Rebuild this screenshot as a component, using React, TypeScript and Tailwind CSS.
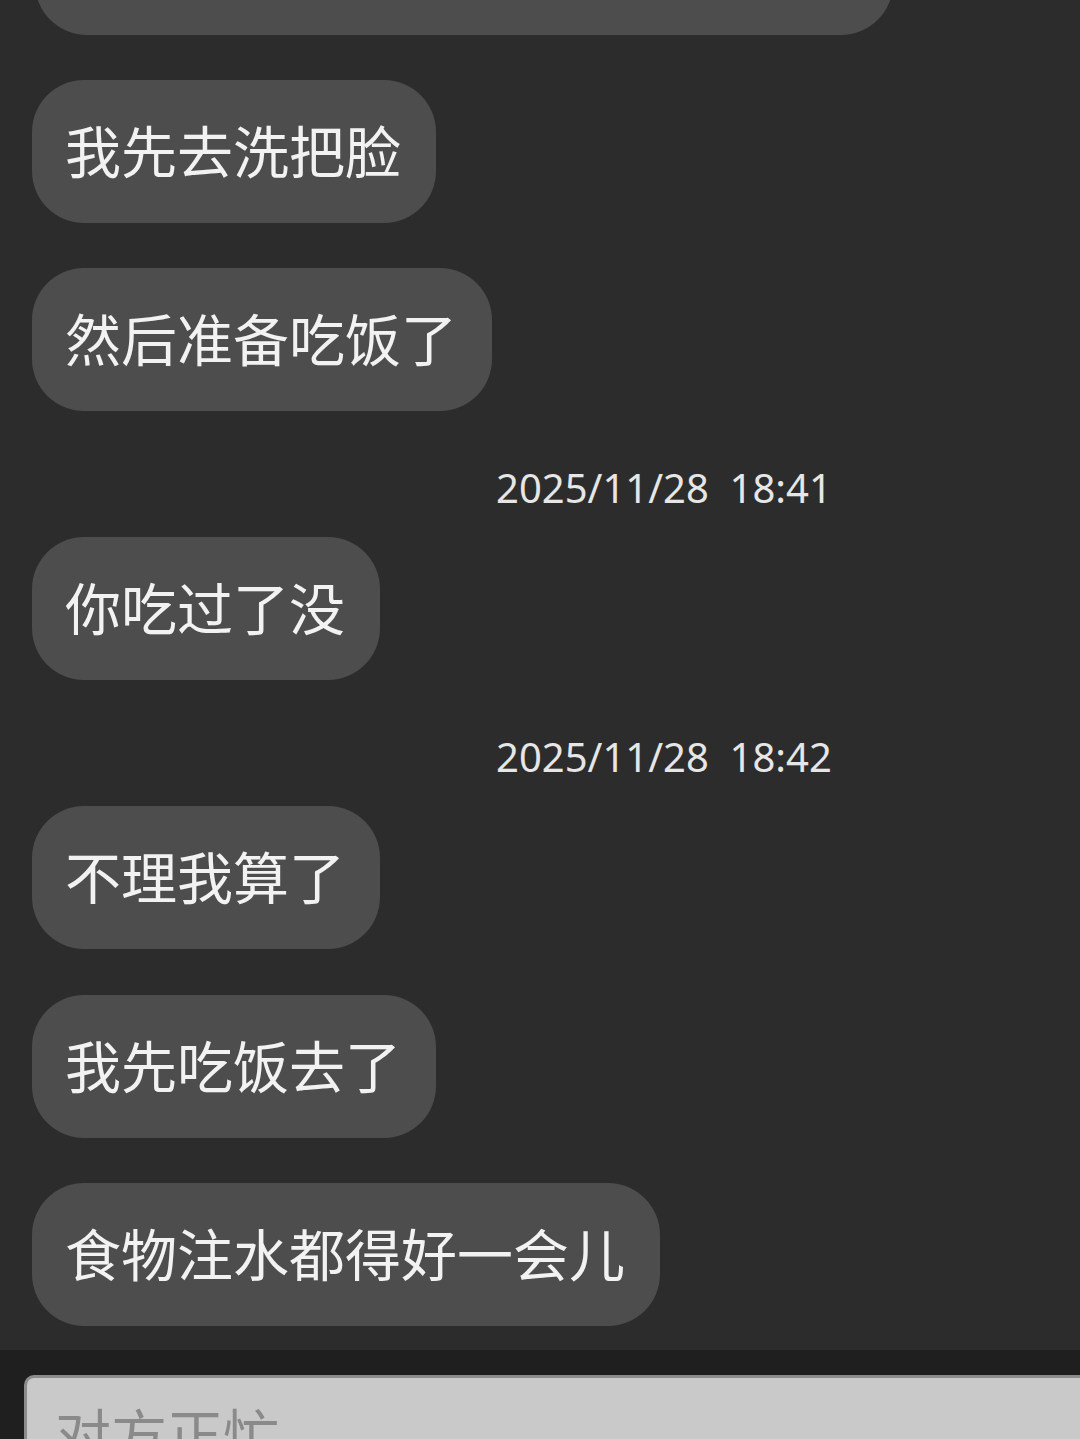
import React from 'react';

type Item = { kind: 'msg' | 'time'; text: string; mt: string };

const items: Item[] = [
  { kind: 'msg', text: '我先去洗把脸', mt: 'mt-[45px]' },
  { kind: 'msg', text: '然后准备吃饭了', mt: 'mt-[45px]' },
  { kind: 'time', text: '2025/11/28  18:41', mt: 'mt-[57px]' },
  { kind: 'msg', text: '你吃过了没', mt: 'mt-[29px]' },
  { kind: 'time', text: '2025/11/28  18:42', mt: 'mt-[57px]' },
  { kind: 'msg', text: '不理我算了', mt: 'mt-[29px]' },
  { kind: 'msg', text: '我先吃饭去了', mt: 'mt-[46px]' },
  { kind: 'msg', text: '食物注水都得好一会儿', mt: 'mt-[45px]' },
];

const font = { fontFamily: '"Noto Sans CJK SC", "Noto Sans", sans-serif' };

const Bubble: React.FC<{ text: string; className?: string }> = ({ text, className = '' }) => (
  <div
    className={`self-start h-[143px] flex items-center pl-[33px] pr-[35px] pb-[5px] rounded-[52px] bg-[#4d4d4d] text-[#f2f2f2] text-[56px] leading-none whitespace-nowrap ${className}`}
  >
    {text}
  </div>
);

const App: React.FC = () => {
  return (
    <div className="h-[1439px] w-[1080px] overflow-hidden bg-[#2c2c2c] flex flex-col" style={font}>
      <div className="flex-1 flex flex-col pl-[32px] overflow-hidden">
        <div className="-mt-[108px] w-[858px] h-[143px] rounded-[52px] bg-[#4d4d4d] ml-[3px]" />
        {items.map((it, i) =>
          it.kind === 'time' ? (
            <div
              key={i}
              className={`${it.mt} h-[40px] leading-[40px] ml-[464px] text-[40px] text-[#e6e6e6] whitespace-pre`}
              style={{ fontFamily: '"Noto Sans", sans-serif' }}
            >
              {it.text}
            </div>
          ) : (
            <Bubble key={i} text={it.text} className={it.mt} />
          ),
        )}
      </div>
      <div className="h-[89px] bg-[#1f1f1f] pt-[25px] pl-[24px] shrink-0">
        <div className="h-full bg-[#c9c9c9] border-l-[3px] border-t-[3px] border-[#8c8c8c] rounded-tl-[10px] pl-[28px] pt-[26px] overflow-hidden">
          <span className="text-[56px] leading-none text-[#8a8a8a]">对方正忙</span>
        </div>
      </div>
    </div>
  );
};

export default App;
